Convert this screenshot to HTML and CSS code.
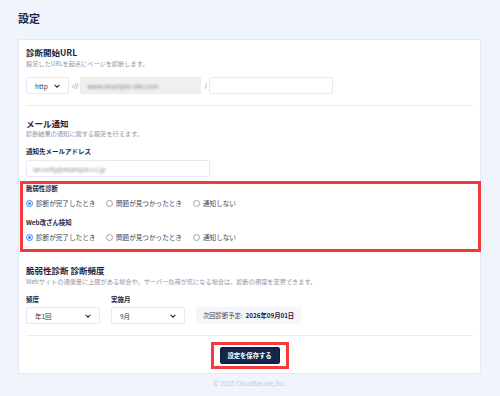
FILE: index.html
```html
<!DOCTYPE html>
<html lang="ja">
  <head>
    <meta charset="UTF-8" />
    <meta name="viewport" content="width=device-width, initial-scale=1.0" />
    <title>設定</title>
    <link rel="stylesheet" href="styles.css">
  </head>
  <body>
    <div class="page">
      <h1 class="pageTitle">設定</h1>

      <div class="card">
        <!-- 診断開始URL -->
        <div class="section firstSection">
          <h2 class="sectionTitle">診断開始URL</h2>
          <p class="sectionNote">設定したURLを起点にページを診断します。</p>
          <div class="urlRow">
            <div class="select selectProto">
              <span>http</span>
              <svg class="chev" viewBox="0 0 10 6" width="6" height="4"><path d="M1 1l4 4 4-4" fill="none" stroke="#1f2a44" stroke-width="1.8"/></svg>
            </div>
            <span class="sep">://</span>
            <div class="input inputHost"><span class="blurred">www.example-site.com</span></div>
            <span class="sep">/</span>
            <div class="input inputPath"></div>
          </div>
        </div>

        <!-- メール通知 -->
        <div class="section mailSection">
          <h2 class="sectionTitle">メール通知</h2>
          <p class="sectionNote">診断結果の通知に関する設定を行えます。</p>
          <label class="fieldLabel">通知先メールアドレス</label>
          <div class="input inputMail"><span class="blurred">security@example.co.jp</span></div>

          <div class="highlight">
            <div class="radioGroup">
              <div class="groupLabel">脆弱性診断</div>
              <div class="radioRow">
                <span class="radio checked"></span><span class="radioText first">診断が完了したとき</span>
                <span class="radio"></span><span class="radioText second">問題が見つかったとき</span>
                <span class="radio"></span><span class="radioText">通知しない</span>
              </div>
            </div>
            <div class="radioGroup">
              <div class="groupLabel">Web改ざん検知</div>
              <div class="radioRow">
                <span class="radio checked"></span><span class="radioText first">診断が完了したとき</span>
                <span class="radio"></span><span class="radioText second">問題が見つかったとき</span>
                <span class="radio"></span><span class="radioText">通知しない</span>
              </div>
            </div>
          </div>
        </div>

        <!-- 診断頻度 -->
        <div class="section freqSection">
          <h2 class="sectionTitle">脆弱性診断 診断頻度</h2>
          <p class="sectionNote">Webサイトの通信量に上限がある場合や、サーバー負荷が気になる場合は、診断の頻度を変更できます。</p>
          <div class="freqRow">
            <div class="freqField">
              <label class="fieldLabel">頻度</label>
              <div class="select selectWide">
                <span>年1回</span>
                <svg class="chev" viewBox="0 0 10 6" width="6" height="4"><path d="M1 1l4 4 4-4" fill="none" stroke="#1f2a44" stroke-width="1.8"/></svg>
              </div>
            </div>
            <div class="freqField">
              <label class="fieldLabel">実施月</label>
              <div class="select selectWide">
                <span>9月</span>
                <svg class="chev" viewBox="0 0 10 6" width="6" height="4"><path d="M1 1l4 4 4-4" fill="none" stroke="#1f2a44" stroke-width="1.8"/></svg>
              </div>
            </div>
            <div class="nextDate">次回診断予定: <b>2026年09月01日</b></div>
          </div>
        </div>

        <div class="actions">
          <div class="btnHighlight">
            <button class="saveBtn">設定を保存する</button>
          </div>
        </div>
      </div>

      <p class="footer">© 2025 CloudSecure,Inc.</p>
    </div>
  </body>
</html>
```

FILE: styles.css
```css
body {
  margin: 0;
  background-color: #f0f4fb;
  font-family: "Noto Sans CJK JP", "Noto Sans", sans-serif;
  color: #1d2640;
}

.page {
  padding: 10px 19px 0 18px;
}

.pageTitle {
  margin: 0;
  font-size: 11px;
  line-height: 16px;
  font-weight: 700;
  color: #1a2444;
}

.card {
  margin-top: 13px;
  background: #fff;
  border: 1px solid #e4e9f2;
  border-radius: 2px;
  padding: 0 7px;
}

.section {
  border-bottom: 1px solid #e8ecf2;
}

.firstSection {
  padding: 6px 0 11px;
}

.mailSection {
  padding: 11px 0 0;
  border-bottom: none;
}

.freqSection {
  padding: 12px 0 11px;
}

.sectionTitle {
  margin: 0;
  font-size: 8.5px;
  line-height: 12px;
  font-weight: 700;
  color: #1a2444;
}

.sectionNote {
  margin: 0;
  font-size: 6.2px;
  line-height: 10px;
  color: #8d94a3;
}

.firstSection .sectionNote,
.freqSection .sectionNote {
  margin-top: 1px;
}

.urlRow {
  display: flex;
  align-items: center;
  margin-top: 8px;
}

.select,
.input {
  box-sizing: border-box;
  height: 17px;
  border: 1px solid #e6eaf1;
  border-radius: 2px;
  display: flex;
  align-items: center;
  font-size: 6.5px;
  color: #333a4a;
}

.select {
  justify-content: space-between;
  padding: 0 8px 0 8px;
}

.selectProto {
  width: 43px;
}

.sep {
  font-size: 6px;
  color: #555d6c;
  margin: 0 2px 0 3px;
}

.inputHost {
  width: 121px;
  background: #efefef;
  border-color: #ececec;
  padding-left: 6px;
}

.inputPath {
  width: 124px;
}

.inputMail {
  width: 184px;
  padding-left: 6px;
  margin-top: 4px;
}

.blurred {
  color: #8a8a8a;
  filter: blur(1.3px);
}

.fieldLabel {
  display: block;
  margin-top: 7px;
  font-size: 6.5px;
  line-height: 10px;
  font-weight: 700;
  color: #1d2640;
}

.highlight {
  margin: 4px -8px 0 -6px;
  border: 3px solid #f43b3b;
  padding: 0 3px 7px;
  display: flex;
  flex-direction: column;
  gap: 10px;
}

.groupLabel {
  font-size: 6.4px;
  line-height: 10px;
  font-weight: 700;
  color: #1d2640;
}

.radioRow {
  display: flex;
  align-items: center;
  height: 10px;
  margin-top: 4px;
}

.radio {
  box-sizing: border-box;
  width: 7px;
  height: 7px;
  border-radius: 50%;
  border: 1px solid #9aa1ad;
  margin-right: 3px;
  position: relative;
}

.radio.checked {
  border-color: #3b82f6;
}

.radio.checked::after {
  content: "";
  position: absolute;
  left: 1px;
  top: 1px;
  width: 3px;
  height: 3px;
  border-radius: 50%;
  background: #3b82f6;
}

.radioText {
  font-size: 6.6px;
  color: #3a4254;
}

.radioText.first {
  width: 70px;
}

.radioText.second {
  width: 77px;
}

.freqRow {
  display: flex;
  align-items: flex-end;
}

.freqField {
  margin-right: 11px;
}

.selectWide {
  width: 74px;
  margin-top: 3px;
}

.nextDate {
  box-sizing: border-box;
  height: 17px;
  padding: 0 7px;
  background: #f5f6f8;
  border-radius: 2px;
  display: flex;
  align-items: center;
  font-size: 6.3px;
  color: #3a4254;
}

.nextDate b {
  margin-left: 3px;
  color: #1a2444;
}

.actions {
  display: flex;
  justify-content: center;
  padding: 6px 0 4px;
}

.btnHighlight {
  border: 3px solid #f43b3b;
  padding: 2px 6px;
}

.saveBtn {
  display: block;
  height: 17px;
  width: 60px;
  padding: 0;
  border: 1px solid #0e1c3c;
  border-radius: 2px;
  background: #15264d;
  color: #fff;
  font-family: "Noto Sans CJK JP", sans-serif;
  font-size: 6.3px;
  font-weight: 700;
}

.footer {
  margin: 5px 0 0;
  text-align: center;
  font-family: "Noto Sans", sans-serif;
  font-size: 6.3px;
  line-height: 10px;
  color: #c3c9d4;
}
```
